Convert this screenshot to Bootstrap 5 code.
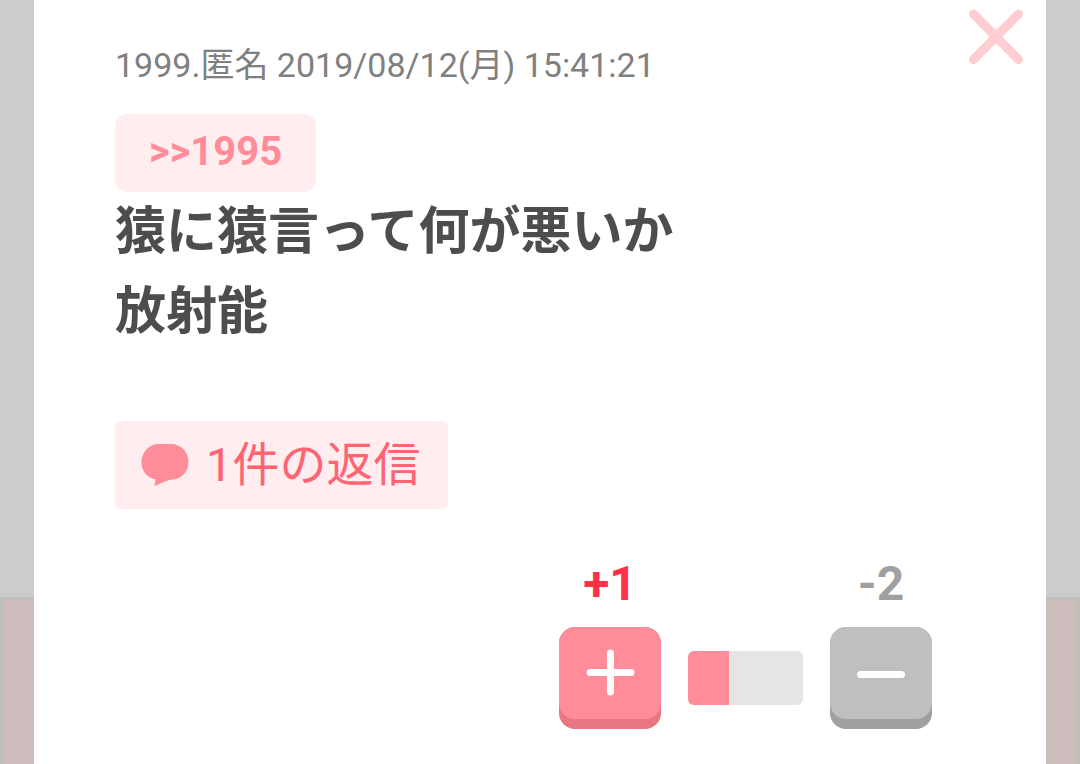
<!DOCTYPE html>
<html lang="ja">
<head>
<meta charset="utf-8">
<meta name="viewport" content="width=device-width, initial-scale=1">
<title>コメント</title>
<link href="https://cdn.jsdelivr.net/npm/bootstrap@5.3.0/dist/css/bootstrap.min.css" rel="stylesheet">
<style>
  body { background: #ccc; font-family: Roboto, "Noto Sans CJK JP", sans-serif; }
  .stage { min-height: 100vh; }
  .stage > * { grid-area: 1 / 1; }
  .page-behind { margin-top: 597px; background: #ccbcbc; border: 3px solid #bfbfbf; border-bottom: 0; }
  .popup { margin: 0 34px; padding: 40px 81px 35px; background: #fff; }
  .close-btn { top: 4px; right: 16px; line-height: 0; }
  .meta { font-size: 34px; line-height: 50px; color: #808080; }
  .anchor-link { margin-top: 24px; padding: 0 34px; font-size: 40px; line-height: 76px; height: 78px; border-radius: 12px; background: #ffedef; color: #ff8d99; }
  .comment-text { font-size: 51px; line-height: 80px; color: #4d4d4d; }
  .reply-link { margin-top: 69px; padding: 0 28px 0 26px; gap: 17px; height: 88px; font-size: 47px; line-height: 88px; border-radius: 6px; background: #ffedef; color: #ff6473; }
  .votes { margin: 47px 33px 0 0; gap: 27px; }
  .count { font-size: 48px; line-height: 56px; margin-bottom: 15px; }
  .plus-count { color: #ff3048; }
  .minus-count { color: #a0a0a0; }
  .vote-btn { width: 102px; height: 102px; padding: 0 0 10px; border: 0; border-radius: 16px; overflow: hidden; }
  .vote-btn svg { display: block; }
  .vote-face { height: 92px; border-radius: 16px; }
  .plus-btn { background: #e97681; }
  .plus-btn .vote-face { background: #ff8d99; }
  .minus-btn { background: #a0a0a0; }
  .minus-btn .vote-face { background: #bfbfbf; }
  .ratio-bar { width: 115px; height: 54px; margin-bottom: 24px; border-radius: 6px; background: #e5e5e5; }
  .ratio-fill { background: #ff8d99; }
</style>
</head>
<body>
<div class="stage d-grid">
  <div class="page-behind"></div>
  <main class="popup position-relative">
    <button type="button" class="close-btn btn p-0 border-0 position-absolute" aria-label="閉じる">
      <svg width="68" height="68" viewBox="0 0 68 68" fill="none" stroke="#ffcdd2" stroke-width="9" stroke-linecap="round"><path d="M11.500 10 56.500 55.500M56.500 10 11.500 55.500"/></svg>
    </button>
    <div class="meta">1999.匿名 2019/08/12(月) 15:41:21</div>
    <div class="d-flex"><a href="#" class="anchor-link fw-bold text-decoration-none">&gt;&gt;1995</a></div>
    <p class="comment-text fw-bold mb-0">猿に猿言って何が悪いか<br>放射能</p>
    <div class="d-flex">
      <a href="#" class="reply-link d-flex align-items-center text-decoration-none">
        <svg width="48" height="44" viewBox="0 0 48 44" fill="#ff8d99"><path d="M18 1H30C40 1 47.500 9 47.500 19C47.500 29 40 36.500 31 36.500C27 37 21 40 13.500 43L14.500 36.500C6 34.500.5 28 .5 19.500C.5 9 8 1 18 1Z"/></svg>
        <span>1件の返信</span>
      </a>
    </div>
    <div class="votes d-flex justify-content-end align-items-end">
      <div class="text-center">
        <div class="count plus-count fw-bold">+1</div>
        <button type="button" class="vote-btn plus-btn d-block" aria-label="プラス">
          <span class="vote-face d-flex justify-content-center">
            <svg width="102" height="92" viewBox="0 0 102 92" stroke="#fff" stroke-width="7" stroke-linecap="round"><path d="M31 45.500H72M51.500 26V65"/></svg>
          </span>
        </button>
      </div>
      <div class="ratio-bar d-flex overflow-hidden" role="img" aria-label="プラス1 マイナス2">
        <div class="ratio-fill" style="width: 35.600%"></div>
      </div>
      <div class="text-center">
        <div class="count minus-count fw-bold">-2</div>
        <button type="button" class="vote-btn minus-btn d-block" aria-label="マイナス">
          <span class="vote-face d-flex justify-content-center">
            <svg width="102" height="92" viewBox="0 0 102 92" stroke="#fff" stroke-width="7" stroke-linecap="round"><path d="M30.500 47.500H71.500"/></svg>
          </span>
        </button>
      </div>
    </div>
  </main>
</div>
<script src="https://cdn.jsdelivr.net/npm/bootstrap@5.3.0/dist/js/bootstrap.bundle.min.js"></script>
</body>
</html>
